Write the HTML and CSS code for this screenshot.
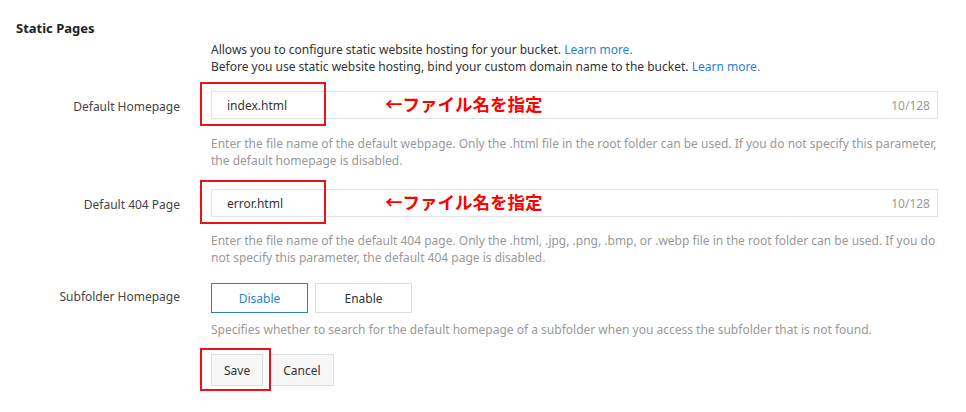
FILE: index.html
```html
<!DOCTYPE html>
<html lang="en">
<head>
  <meta charset="UTF-8">
  <title>Static Pages</title>
  <link rel="stylesheet" href="styles.css">
</head>
<body>

  <div class="section">
    <h3 class="section-title">Static Pages</h3>

    <div class="form-row">
      <div class="form-label"></div>
      <div class="form-control">
        <p class="intro">
          Allows you to configure static website hosting for your bucket. <a href="#">Learn more.</a><br>
          Before you use static website hosting, bind your custom domain name to the bucket. <a href="#">Learn more.</a>
        </p>
      </div>
    </div>

    <!-- Default Homepage -->
    <div class="form-row">
      <label class="form-label field-label">Default Homepage</label>
      <div class="form-control">
        <div class="input-wrap">
          <input type="text" class="text-input" value="index.html">
          <span class="counter">10/128</span>
          <span class="mark mark-input"></span>
          <span class="note">←ファイル名を指定</span>
        </div>
        <p class="help">Enter the file name of the default webpage. Only the .html file in the root folder can be used. If you do not specify this parameter, the default homepage is disabled.</p>
      </div>
    </div>

    <!-- Default 404 Page -->
    <div class="form-row">
      <label class="form-label field-label">Default 404 Page</label>
      <div class="form-control">
        <div class="input-wrap">
          <input type="text" class="text-input" value="error.html">
          <span class="counter">10/128</span>
          <span class="mark mark-input"></span>
          <span class="note">←ファイル名を指定</span>
        </div>
        <p class="help help-404">Enter the file name of the default 404 page. Only the .html, .jpg, .png, .bmp, or .webp file in the root folder can be used. If you do not specify this parameter, the default 404 page is disabled.</p>
      </div>
    </div>

    <!-- Subfolder Homepage -->
    <div class="form-row">
      <label class="form-label field-label toggle-label">Subfolder Homepage</label>
      <div class="form-control">
        <div class="toggle-group">
          <button class="toggle active">Disable</button>
          <button class="toggle">Enable</button>
        </div>
        <p class="help help-short">Specifies whether to search for the default homepage of a subfolder when you access the subfolder that is not found.</p>
      </div>
    </div>

    <div class="form-row">
      <div class="form-label"></div>
      <div class="form-control">
        <div class="actions">
          <span class="save-wrap">
            <button class="btn">Save</button>
            <span class="mark mark-save"></span>
          </span>
          <button class="btn">Cancel</button>
        </div>
      </div>
    </div>
  </div>

</body>
</html>
```

FILE: styles.css
```css
html {
  background: #fff;
}

body {
  margin: 0;
  padding: 19px 16px 26px;
  font-family: "Noto Sans", "Open Sans", sans-serif;
  font-size: 12px;
  color: #333;
  background: #fff;
}

.section-title {
  margin: 0 0 4px;
  font-size: 13px;
  font-weight: bold;
  color: #222;
}

.form-row {
  display: flex;
  gap: 31px;
}

.form-label {
  width: 164px;
  flex-shrink: 0;
  text-align: right;
}

.field-label {
  padding-top: 7px;
  line-height: 17px;
  color: #444;
}

.toggle-label {
  padding-top: 5px;
}

.form-control {
  width: 727px;
}

.intro {
  margin: 0 0 16px;
  line-height: 17px;
}

.intro a {
  color: #2a7fd4;
  text-decoration: none;
}

.input-wrap {
  position: relative;
  height: 28px;
}

.text-input {
  box-sizing: border-box;
  width: 100%;
  height: 28px;
  padding: 0 15px;
  border: 1px solid #e2e2e2;
  font-family: inherit;
  font-size: 12px;
  color: #333;
  outline: none;
}

.counter {
  position: absolute;
  right: 8px;
  top: 6px;
  color: #999;
  line-height: 17px;
}

.note {
  position: absolute;
  left: 174px;
  top: 1px;
  color: #f00;
  font-weight: bold;
  font-size: 17.5px;
  line-height: 24px;
  font-family: "Noto Sans CJK JP", sans-serif;
}

.mark {
  position: absolute;
  border: 2px solid #e8141b;
  pointer-events: none;
}

.mark-input {
  left: -11px;
  top: -9px;
  width: 122px;
  height: 40px;
}

.help {
  margin: 16px 0 20px;
  line-height: 17px;
  color: #999;
}

.help-404 {
  margin: 15px 0 17px;
}

.help-short {
  margin: 8px 0 16px;
}

.toggle-group {
  display: flex;
  gap: 7px;
}

.toggle {
  width: 97px;
  height: 30px;
  border: 1px solid #ddd;
  background: #fff;
  font-family: inherit;
  font-size: 12px;
  color: #333;
}

.toggle.active {
  border-color: #2a7fd4;
  color: #2a7fd4;
}

.actions {
  display: flex;
  gap: 7px;
}

.save-wrap {
  position: relative;
  display: flex;
}

.btn {
  height: 32px;
  padding: 0 12px;
  border: 1px solid #ddd;
  background: #f7f7f7;
  font-family: inherit;
  font-size: 12px;
  color: #333;
}

.mark-save {
  left: -11px;
  top: -6px;
  width: 67px;
  height: 39px;
}
```
